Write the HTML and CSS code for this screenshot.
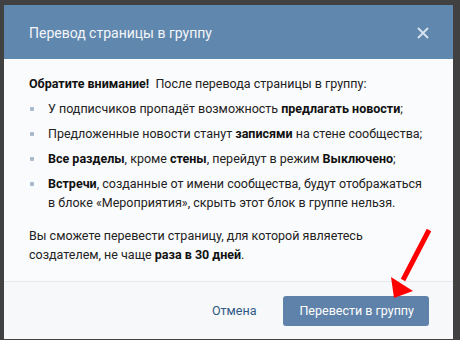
FILE: index.html
```html
<!DOCTYPE html>
<html lang="ru">
<head>
<meta charset="utf-8">
<link rel="stylesheet" href="styles.css">
</head>
<body>
<div class="backdrop">
  <div class="box">
    <div class="box-header">
      <div class="box-title">Перевод страницы в группу</div>
      <svg class="box-close" width="12" height="12" viewBox="0 0 12 12"><path d="M1 1L11 11M11 1L1 11" stroke="#dbe4ee" stroke-width="1.8" fill="none"/></svg>
    </div>
    <div class="box-body">
      <p class="lead"><b>Обратите внимание!</b>&nbsp; После перевода страницы в группу:</p>
      <ul class="list">
        <li>У подписчиков пропадёт возможность <b>предлагать новости</b>;</li>
        <li>Предложенные новости станут <b>записями</b> на стене сообщества;</li>
        <li><b>Все разделы</b>, кроме <b>стены</b>, перейдут в режим <b>Выключено</b>;</li>
        <li><b>Встречи</b>, созданные от имени сообщества, будут отображаться в блоке «Мероприятия», скрыть этот блок в группе нельзя.</li>
      </ul>
      <p class="note">Вы сможете перевести страницу, для которой являетесь создателем, не чаще <b>раза в 30 дней</b>.</p>
    </div>
    <div class="box-footer">
      <span class="btn-cancel">Отмена</span>
      <span class="btn-primary">Перевести в группу</span>
    </div>
  </div>
  <svg class="arrow" width="460" height="340" viewBox="0 0 460 340">
    <line x1="429" y1="230" x2="403" y2="280" stroke="#f00" stroke-width="5"/>
    <polygon points="394,298 391,277 413,291" fill="#f00"/>
  </svg>
</div>
</body>
</html>
```
FILE: styles.css
```css
html, body {
  margin: 0;
  padding: 0;
}
body {
  background: #414141;
  font-family: Roboto, "Open Sans", "Liberation Sans", sans-serif;
  font-size: 13px;
  color: #222;
}
.backdrop {
  position: relative;
  width: 460px;
  height: 340px;
  padding: 5px 0 0 4px;
  box-sizing: border-box;
}
.box {
  width: 449px;
  height: 334px;
  display: flex;
  flex-direction: column;
  background: #fafbfc;
  overflow: hidden;
}
.box-header {
  height: 54px;
  flex: none;
  background: #6087ae;
  display: flex;
  align-items: center;
  justify-content: space-between;
  padding: 0 25px 0 25px;
}
.box-title {
  color: #f3f6f9;
  font-size: 14px;
  padding-top: 1px;
}
.box-close {
  display: block;
  margin-right: -1px;
  margin-top: 2px;
}
.box-body {
  flex: 1;
  padding: 15px 25px 0 25px;
  font-size: 12.5px;
  line-height: 19px;
}
.box-body p {
  margin: 0;
}
.box-body b {
  font-weight: 700;
  color: #111;
}
.list {
  list-style: none;
  margin: 0;
  padding: 0;
}
.list li {
  position: relative;
  margin-top: 6px;
  padding-left: 19px;
}
.list li::before {
  content: "";
  position: absolute;
  left: 1px;
  top: 8px;
  width: 4px;
  height: 4px;
  border-radius: 1px;
  background: #a9b9cc;
}
.note {
  margin-top: 14px !important;
}
.box-footer {
  height: 57px;
  flex: none;
  border-top: 1px solid #e5e8ec;
  background: #f7f8fa;
  display: flex;
  align-items: center;
  justify-content: flex-end;
  padding: 0 24px 0 0;
}
.btn-cancel {
  color: #2f5a86;
  font-size: 12.5px;
  padding: 0 27px 0 0;
}
.btn-primary {
  background: #5e82a9;
  color: #fff;
  font-size: 12.5px;
  border-radius: 3px;
  height: 30px;
  line-height: 30px;
  padding: 0 15px 0 16px;
  margin-top: 1px;
}
.arrow {
  position: absolute;
  left: 0;
  top: 0;
  pointer-events: none;
}
```
